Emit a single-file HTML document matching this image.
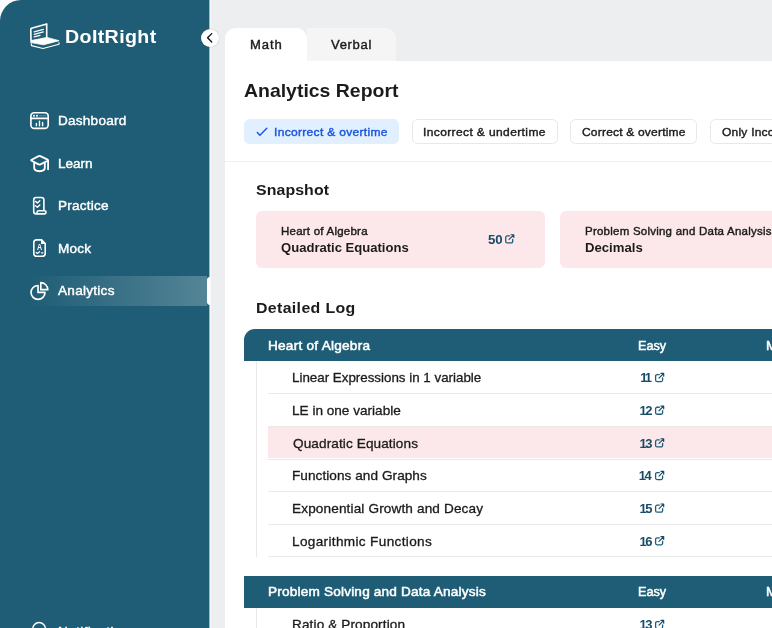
<!DOCTYPE html>
<html lang="en">
<head>
<meta charset="utf-8">
<title>DoItRight – Analytics Report</title>
<style>
  html,body{margin:0;padding:0;background:#fff;}
  body{width:772px;height:628px;overflow:hidden;position:relative;font-family:"Liberation Sans",Arial,sans-serif;}
  #app{position:absolute;left:0;top:0;width:772px;height:628px;overflow:hidden;background:#edeef0;}
  .abs{position:absolute;}
  .t{position:absolute;white-space:pre;line-height:1;transform-origin:0 50%;font-family:"Liberation Sans",Arial,sans-serif;}
  /* sidebar */
  #cornerbg{left:0;top:0;width:40px;height:40px;background:#fbfbfc;}
  #sidebar{left:0;top:0;width:209px;height:660px;background:#1e5d75;border-top-left-radius:21px;}
  #sbedge{left:209px;top:0;width:2px;height:628px;background:linear-gradient(90deg,#9dbac5 0,#9dbac5 50%,#f6f7f8 50%,#f6f7f8 100%);}
  #active{left:28px;top:276px;width:179px;height:29.5px;background:linear-gradient(90deg,rgba(255,255,255,0) 0%,rgba(255,255,255,.245) 100%);}
  #activebar{left:206.5px;top:276.5px;width:3px;height:28.5px;background:#fff;border-radius:3px 0 0 3px;}
  #collapse{left:201.1px;top:28.9px;width:18px;height:18px;border-radius:50%;background:#fff;box-shadow:0 0 0 .5px rgba(0,0,0,.12);}
  /* main */
  #tabMath{left:225.2px;top:28px;width:81.5px;height:40px;background:#fff;border-radius:11px 11px 0 0;}
  #tabVerbal{left:306.7px;top:28px;width:89.3px;height:33px;background:#f5f5f6;border-radius:0 11px 0 0;}
  #panel{left:225.2px;top:60.700px;width:560px;height:600px;background:#fff;}
  #divider{left:225.2px;top:161px;width:560px;height:1px;background:#f0f1f2;}
  .chip{position:absolute;top:119.2px;height:24.6px;box-sizing:border-box;border:1px solid #e6e8ec;border-radius:5.5px;background:#fff;}
  .chip.on{background:#e1effe;border-color:#e1effe;}
  .card{position:absolute;top:210.8px;height:57px;background:#fce8ea;border-radius:6px;}
  .thead{position:absolute;left:243.8px;width:560px;height:32.4px;background:#1e5d75;}
  .sep{position:absolute;left:268px;width:520px;height:1px;background:#e9e9ea;}
  .vline{position:absolute;left:256px;width:1px;background:#e9e9ea;}
  #txt{position:absolute;left:0;top:0;width:772px;height:628px;will-change:transform;}
  svg{position:absolute;left:0;top:0;overflow:visible;}
</style>
</head>
<body>
<div id="app">
  <div id="cornerbg" class="abs"></div>
  <nav id="sidebar" class="abs"></nav>
  <div id="sbedge" class="abs"></div>
  <div id="active" class="abs"></div>
  <div id="activebar" class="abs"></div>

  <div id="tabVerbal" class="abs"></div>
  <div id="panel" class="abs"></div>
  <div id="tabMath" class="abs"></div>
  <div id="divider" class="abs"></div>

  <div class="chip on" style="left:244.2px;width:154.8px"></div>
  <div class="chip" style="left:411.6px;width:146.2px"></div>
  <div class="chip" style="left:570.4px;width:126.9px"></div>
  <div class="chip" style="left:710.3px;width:110px"></div>

  <div class="card" style="left:256px;width:289px"></div>
  <div class="card" style="left:560.2px;width:289px"></div>

  <!-- table 1 -->
  <div class="thead" style="top:328.6px;border-top-left-radius:11px"></div>
  <div class="vline" style="top:361px;height:195.6px"></div>
  <div class="abs" style="left:268px;top:426.2px;width:520px;height:32.3px;background:#fce8ea"></div>
  <div class="sep" style="top:393.3px"></div>
  <div class="sep" style="top:425.9px"></div>
  <div class="sep" style="top:458.5px"></div>
  <div class="sep" style="top:491.1px"></div>
  <div class="sep" style="top:523.8px"></div>
  <div class="sep" style="top:556.3px"></div>
  <!-- table 2 -->
  <div class="thead" style="top:575.8px"></div>
  <div class="vline" style="top:608.2px;height:40px"></div>

  <div id="collapse" class="abs"></div>

<div id="txt">
<span class="t " style="left:64.94px;top:28.00px;font-size:18.5px;font-weight:700;color:#fff;letter-spacing:0.354px;transform:scaleX(1.0600);">DoItRight</span>
<span class="t " style="left:57.66px;top:114.00px;font-size:13px;font-weight:400;color:#fff;letter-spacing:0.217px;transform:scaleX(1.0450);-webkit-text-stroke:0.4px currentColor;">Dashboard</span>
<span class="t " style="left:57.66px;top:156.50px;font-size:13px;font-weight:400;color:#fff;letter-spacing:0.000px;transform:scaleX(1.0400);-webkit-text-stroke:0.4px currentColor;">Learn</span>
<span class="t " style="left:57.66px;top:199.00px;font-size:13px;font-weight:400;color:#fff;letter-spacing:0.205px;transform:scaleX(1.0450);-webkit-text-stroke:0.4px currentColor;">Practice</span>
<span class="t " style="left:57.66px;top:241.50px;font-size:13px;font-weight:400;color:#fff;letter-spacing:0.179px;transform:scaleX(1.0450);-webkit-text-stroke:0.4px currentColor;">Mock</span>
<span class="t " style="left:58.00px;top:284.00px;font-size:13px;font-weight:400;color:#fff;letter-spacing:0.252px;transform:scaleX(1.0450);-webkit-text-stroke:0.4px currentColor;">Analytics</span>
<span class="t " style="left:57.66px;top:625.10px;font-size:13px;font-weight:400;color:#fff;letter-spacing:0.361px;transform:scaleX(1.0450);-webkit-text-stroke:0.4px currentColor;">Notifications</span>
<span class="t " style="left:249.76px;top:38.75px;font-size:12.5px;font-weight:400;color:#1b1b1b;letter-spacing:0.876px;transform:scaleX(1.0450);-webkit-text-stroke:0.4px currentColor;">Math</span>
<span class="t " style="left:331.00px;top:38.75px;font-size:12.5px;font-weight:400;color:#1b1b1b;letter-spacing:0.625px;transform:scaleX(1.0450);-webkit-text-stroke:0.4px currentColor;">Verbal</span>
<span class="t " style="left:244.25px;top:81.75px;font-size:18.5px;font-weight:700;color:#1b1b1b;letter-spacing:0.000px;transform:scaleX(1.0504);">Analytics Report</span>
<span class="t " style="left:273.95px;top:127.25px;font-size:11.5px;font-weight:400;color:#1a56db;letter-spacing:0.298px;transform:scaleX(1.0450);-webkit-text-stroke:0.4px currentColor;">Incorrect &amp; overtime</span>
<span class="t " style="left:423.20px;top:127.25px;font-size:11.5px;font-weight:400;color:#1b1b1b;letter-spacing:0.362px;transform:scaleX(1.0450);-webkit-text-stroke:0.4px currentColor;">Incorrect &amp; undertime</span>
<span class="t " style="left:582.25px;top:127.25px;font-size:11.5px;font-weight:400;color:#1b1b1b;letter-spacing:0.182px;transform:scaleX(1.0450);-webkit-text-stroke:0.4px currentColor;">Correct &amp; overtime</span>
<span class="t " style="left:722.00px;top:127.25px;font-size:11.5px;font-weight:400;color:#1b1b1b;letter-spacing:0.211px;transform:scaleX(1.0450);-webkit-text-stroke:0.4px currentColor;">Only Incorrect</span>
<span class="t " style="left:256.25px;top:182.00px;font-size:15px;font-weight:700;color:#1b1b1b;letter-spacing:0.074px;transform:scaleX(1.0600);">Snapshot</span>
<span class="t " style="left:280.50px;top:226.00px;font-size:11px;font-weight:400;color:#1b1b1b;letter-spacing:0.223px;transform:scaleX(1.0450);-webkit-text-stroke:0.4px currentColor;">Heart of Algebra</span>
<span class="t " style="left:280.50px;top:240.50px;font-size:13px;font-weight:700;color:#1b1b1b;letter-spacing:0.000px;transform:scaleX(1.0046);">Quadratic Equations</span>
<span class="t " style="left:487.75px;top:232.50px;font-size:13px;font-weight:700;color:#174c66;letter-spacing:0.000px;transform:scaleX(1.0183);">50</span>
<span class="t " style="left:584.75px;top:226.00px;font-size:11px;font-weight:400;color:#1b1b1b;letter-spacing:0.226px;transform:scaleX(1.0450);-webkit-text-stroke:0.4px currentColor;">Problem Solving and Data Analysis</span>
<span class="t " style="left:584.75px;top:240.50px;font-size:13px;font-weight:700;color:#1b1b1b;letter-spacing:0.000px;transform:scaleX(1.0112);">Decimals</span>
<span class="t " style="left:255.54px;top:299.90px;font-size:15px;font-weight:700;color:#1b1b1b;letter-spacing:0.327px;transform:scaleX(1.0600);">Detailed Log</span>
<span class="t hd" style="left:267.70px;top:338.50px;font-size:13px;font-weight:400;color:#fff;letter-spacing:0.243px;transform:scaleX(1.0450);-webkit-text-stroke:0.5px currentColor;">Heart of Algebra</span>
<span class="t hd" style="left:638.03px;top:338.50px;font-size:13px;font-weight:400;color:#fff;letter-spacing:0.000px;transform:scaleX(0.9681);-webkit-text-stroke:0.5px currentColor;">Easy</span>
<span class="t hd" style="left:765.96px;top:338.50px;font-size:13px;font-weight:400;color:#fff;letter-spacing:1.068px;transform:scaleX(1.0450);-webkit-text-stroke:0.5px currentColor;">Medium</span>
<span class="t " style="left:291.97px;top:371.25px;font-size:13px;font-weight:400;color:#1b1b1b;letter-spacing:0.000px;transform:scaleX(1.0270);-webkit-text-stroke:0.3px currentColor;">Linear Expressions in 1 variable</span>
<span class="t" style="left:640.25px;top:371.25px;font-size:13px;font-weight:700;color:#174c66"><span style="letter-spacing:-2.8px">1</span>1</span>
<span class="t " style="left:291.95px;top:403.90px;font-size:13px;font-weight:400;color:#1b1b1b;letter-spacing:0.001px;transform:scaleX(1.0450);-webkit-text-stroke:0.3px currentColor;">LE in one variable</span>
<span class="t" style="left:639.50px;top:403.90px;font-size:13px;font-weight:700;color:#174c66"><span style="letter-spacing:-1.6px">1</span>2</span>
<span class="t " style="left:293.00px;top:436.55px;font-size:13px;font-weight:400;color:#1b1b1b;letter-spacing:0.100px;transform:scaleX(1.0450);-webkit-text-stroke:0.3px currentColor;">Quadratic Equations</span>
<span class="t" style="left:639.50px;top:436.55px;font-size:13px;font-weight:700;color:#174c66"><span style="letter-spacing:-1.6px">1</span>3</span>
<span class="t " style="left:291.95px;top:469.20px;font-size:13px;font-weight:400;color:#1b1b1b;letter-spacing:0.056px;transform:scaleX(1.0450);-webkit-text-stroke:0.3px currentColor;">Functions and Graphs</span>
<span class="t" style="left:638.75px;top:469.20px;font-size:13px;font-weight:700;color:#174c66"><span style="letter-spacing:-1.6px">1</span>4</span>
<span class="t " style="left:291.95px;top:501.85px;font-size:13px;font-weight:400;color:#1b1b1b;letter-spacing:0.133px;transform:scaleX(1.0450);-webkit-text-stroke:0.3px currentColor;">Exponential Growth and Decay</span>
<span class="t" style="left:639.50px;top:501.85px;font-size:13px;font-weight:700;color:#174c66"><span style="letter-spacing:-1.6px">1</span>5</span>
<span class="t " style="left:291.95px;top:534.50px;font-size:13px;font-weight:400;color:#1b1b1b;letter-spacing:0.329px;transform:scaleX(1.0450);-webkit-text-stroke:0.3px currentColor;">Logarithmic Functions</span>
<span class="t" style="left:639.50px;top:534.50px;font-size:13px;font-weight:700;color:#174c66"><span style="letter-spacing:-1.6px">1</span>6</span>
<span class="t hd" style="left:267.70px;top:585.00px;font-size:13px;font-weight:400;color:#fff;letter-spacing:0.189px;transform:scaleX(1.0450);-webkit-text-stroke:0.5px currentColor;">Problem Solving and Data Analysis</span>
<span class="t hd" style="left:638.03px;top:585.00px;font-size:13px;font-weight:400;color:#fff;letter-spacing:0.000px;transform:scaleX(0.9681);-webkit-text-stroke:0.5px currentColor;">Easy</span>
<span class="t hd" style="left:765.96px;top:585.00px;font-size:13px;font-weight:400;color:#fff;letter-spacing:1.068px;transform:scaleX(1.0450);-webkit-text-stroke:0.5px currentColor;">Medium</span>
<span class="t " style="left:291.95px;top:618.25px;font-size:13px;font-weight:400;color:#1b1b1b;letter-spacing:0.114px;transform:scaleX(1.0450);-webkit-text-stroke:0.3px currentColor;">Ratio &amp; Proportion</span>
<span class="t" style="left:639.50px;top:618.25px;font-size:13px;font-weight:700;color:#174c66"><span style="letter-spacing:-1.6px">1</span>3</span>
</div>

  <svg width="772" height="628" viewBox="0 0 772 628" fill="none" stroke-linecap="round" stroke-linejoin="round">
    <!-- logo -->
    <g stroke="#fff">
      <path d="M31 40.2 L30.8 29.2 Q30.8 28.5 31.5 28.3 L46.7 23.900 L46.700 37.400" stroke-width="1.6"/>
      <path d="M34.2 31.8 L43.3 29.3 M34.2 34.3 L43.3 31.8 M34.2 36.9 L40 35.3" stroke-width="1.25"/>
      <path d="M31 40.6 L46.9 37.4 L59.1 40.7 L43.5 44.8 L31 42.6 Z" fill="#fff" stroke-width=".8"/>
      <path d="M31.2 43.6 L31.5 45.6 L43 48.5 L59 44.3 L59 42.6" stroke-width="1.1"/>
    </g>
    <!-- dashboard -->
    <g stroke="#fff" stroke-width="1.65">
      <rect x="30.9" y="112.7" width="17.3" height="15.7" rx="3.4"/>
      <path d="M31 118.4 H48.1"/>
      <path d="M36.4 123.4 V125.7 M39.5 121.1 V125.7 M42.6 122.4 V125.7" stroke-width="1.4"/>
      <path d="M33.9 115.700 h.100 M36.900 115.700 h.100" stroke-width="1.9"/>
      <path d="M39.2 115.8 H46" stroke-width=".5" opacity=".6"/>
    </g>
    <!-- learn -->
    <g stroke="#fff" stroke-width="1.85">
      <path d="M38.6 156.100 Q39.5 155.600 40.4 156.100 L47.6 159.700 Q48.5 160.200 47.6 160.700 L40.4 164.400 Q39.5 164.900 38.6 164.400 L31.6 160.700 Q30.700 160.200 31.600 159.700 Z"/>
      <path d="M34.2 162.800 V167.800 Q34.200 171.200 39.500 171.200 Q44.800 171.200 44.800 167.800 V162.800"/>
      <path d="M48.1 160.700 V169.200"/>
    </g>
    <!-- practice -->
    <g stroke="#fff" stroke-width="1.6">
      <path d="M43.9 210.7 V200 Q43.9 197.5 41.4 197.5 H36.2 Q33.7 197.5 33.7 200 V211.4 Q33.7 213.9 36.2 213.9 H44.8 A1.65 1.65 0 0 0 44.8 210.7 H38.7 A1.6 1.6 0 0 0 37.1 212.3 Q37.1 213.900 35.600 213.900"/>
      <path d="M35.5 201.4 L37.4 202.9 L39.8 200.7 M35.5 205.7 L37.4 207.2 L39.8 205" stroke-width="1.4"/>
    </g>
    <!-- mock -->
    <g stroke="#fff" stroke-width="1.6">
      <path d="M41.6 239.9 H36.7 Q33.8 239.9 33.8 242.8 V253.4 Q33.8 256.3 36.7 256.3 H42.3 Q45.2 256.3 45.2 253.4 V243.5 Z"/>
      <path d="M41.6 240.2 V243.4 H45" stroke-width="1.1" fill="#fff"/>
      <path d="M36.1 252.5 L37.4 253.5 L39.6 251.7 M41.5 252.8 H42.9" stroke-width="1.2"/>
    </g>
    <text x="0" y="0" transform="translate(39.500 249.900) scale(.86 1)" text-anchor="middle" font-family="Liberation Sans, Arial, sans-serif" font-weight="700" font-size="8.2" fill="#fff" stroke="none">A</text>
    <!-- analytics pie -->
    <g stroke="#fff" stroke-width="1.8" transform="translate(28.26 279.9) scale(.93)">
      <path d="M10.5 6a7.5 7.5 0 1 0 7.5 7.5h-7.5V6Z"/>
      <path d="M13.5 10.5H21A7.5 7.5 0 0 0 13.5 3v7.500Z"/>
    </g>
    <!-- bell (notifications) -->
    <circle cx="39.1" cy="629" r="6.45" stroke="#fff" stroke-width="1.5"/>
    <!-- collapse chevron -->
    <path d="M211.7 33.600 L207.600 37.800 L211.700 42" stroke="#111" stroke-width="1.35"/>
    <!-- chip check -->
    <path d="M257.3 132.4 L259.9 135.2 L266.8 128.3" stroke="#1a56db" stroke-width="1.4"/>
    <!-- external link icons -->
    <g transform="translate(504.80 234.40)"><path d="M4.6 1.5 H2.4 A1.5 1.5 0 0 0 .9 3 V7 A1.5 1.5 0 0 0 2.4 8.5 H6.4 A1.5 1.5 0 0 0 7.9 7 V4.9" stroke="#1e5d75" stroke-width="1.3"/><path d="M4.3 5 L8.9 .4 M6.2 .3 H9 V3.1" stroke="#174c66" stroke-width="1.15"/></g>
    <g transform="translate(654.70 373.10)"><path d="M4.6 1.5 H2.4 A1.5 1.5 0 0 0 .9 3 V7 A1.5 1.5 0 0 0 2.4 8.5 H6.4 A1.5 1.5 0 0 0 7.9 7 V4.9" stroke="#1e5d75" stroke-width="1.3"/><path d="M4.3 5 L8.9 .4 M6.2 .3 H9 V3.1" stroke="#174c66" stroke-width="1.15"/></g>
    <g transform="translate(654.70 405.75)"><path d="M4.6 1.5 H2.4 A1.5 1.5 0 0 0 .9 3 V7 A1.5 1.5 0 0 0 2.4 8.5 H6.4 A1.5 1.5 0 0 0 7.9 7 V4.9" stroke="#1e5d75" stroke-width="1.3"/><path d="M4.3 5 L8.9 .4 M6.2 .3 H9 V3.1" stroke="#174c66" stroke-width="1.15"/></g>
    <g transform="translate(654.70 438.40)"><path d="M4.6 1.5 H2.4 A1.5 1.5 0 0 0 .9 3 V7 A1.5 1.5 0 0 0 2.4 8.5 H6.4 A1.5 1.5 0 0 0 7.9 7 V4.9" stroke="#1e5d75" stroke-width="1.3"/><path d="M4.3 5 L8.9 .4 M6.2 .3 H9 V3.1" stroke="#174c66" stroke-width="1.15"/></g>
    <g transform="translate(654.70 471.05)"><path d="M4.6 1.5 H2.4 A1.5 1.5 0 0 0 .9 3 V7 A1.5 1.5 0 0 0 2.4 8.5 H6.4 A1.5 1.5 0 0 0 7.9 7 V4.9" stroke="#1e5d75" stroke-width="1.3"/><path d="M4.3 5 L8.9 .4 M6.2 .3 H9 V3.1" stroke="#174c66" stroke-width="1.15"/></g>
    <g transform="translate(654.70 503.70)"><path d="M4.6 1.5 H2.4 A1.5 1.5 0 0 0 .9 3 V7 A1.5 1.5 0 0 0 2.4 8.5 H6.4 A1.5 1.5 0 0 0 7.9 7 V4.9" stroke="#1e5d75" stroke-width="1.3"/><path d="M4.3 5 L8.9 .4 M6.2 .3 H9 V3.1" stroke="#174c66" stroke-width="1.15"/></g>
    <g transform="translate(654.70 536.35)"><path d="M4.6 1.5 H2.4 A1.5 1.5 0 0 0 .9 3 V7 A1.5 1.5 0 0 0 2.4 8.5 H6.4 A1.5 1.5 0 0 0 7.9 7 V4.9" stroke="#1e5d75" stroke-width="1.3"/><path d="M4.3 5 L8.9 .4 M6.2 .3 H9 V3.1" stroke="#174c66" stroke-width="1.15"/></g>
    <g transform="translate(654.70 620.10)"><path d="M4.6 1.5 H2.4 A1.5 1.5 0 0 0 .9 3 V7 A1.5 1.5 0 0 0 2.4 8.5 H6.4 A1.5 1.5 0 0 0 7.9 7 V4.9" stroke="#1e5d75" stroke-width="1.3"/><path d="M4.3 5 L8.9 .4 M6.2 .3 H9 V3.1" stroke="#174c66" stroke-width="1.15"/></g>
  </svg>
</div>
</body>
</html>
